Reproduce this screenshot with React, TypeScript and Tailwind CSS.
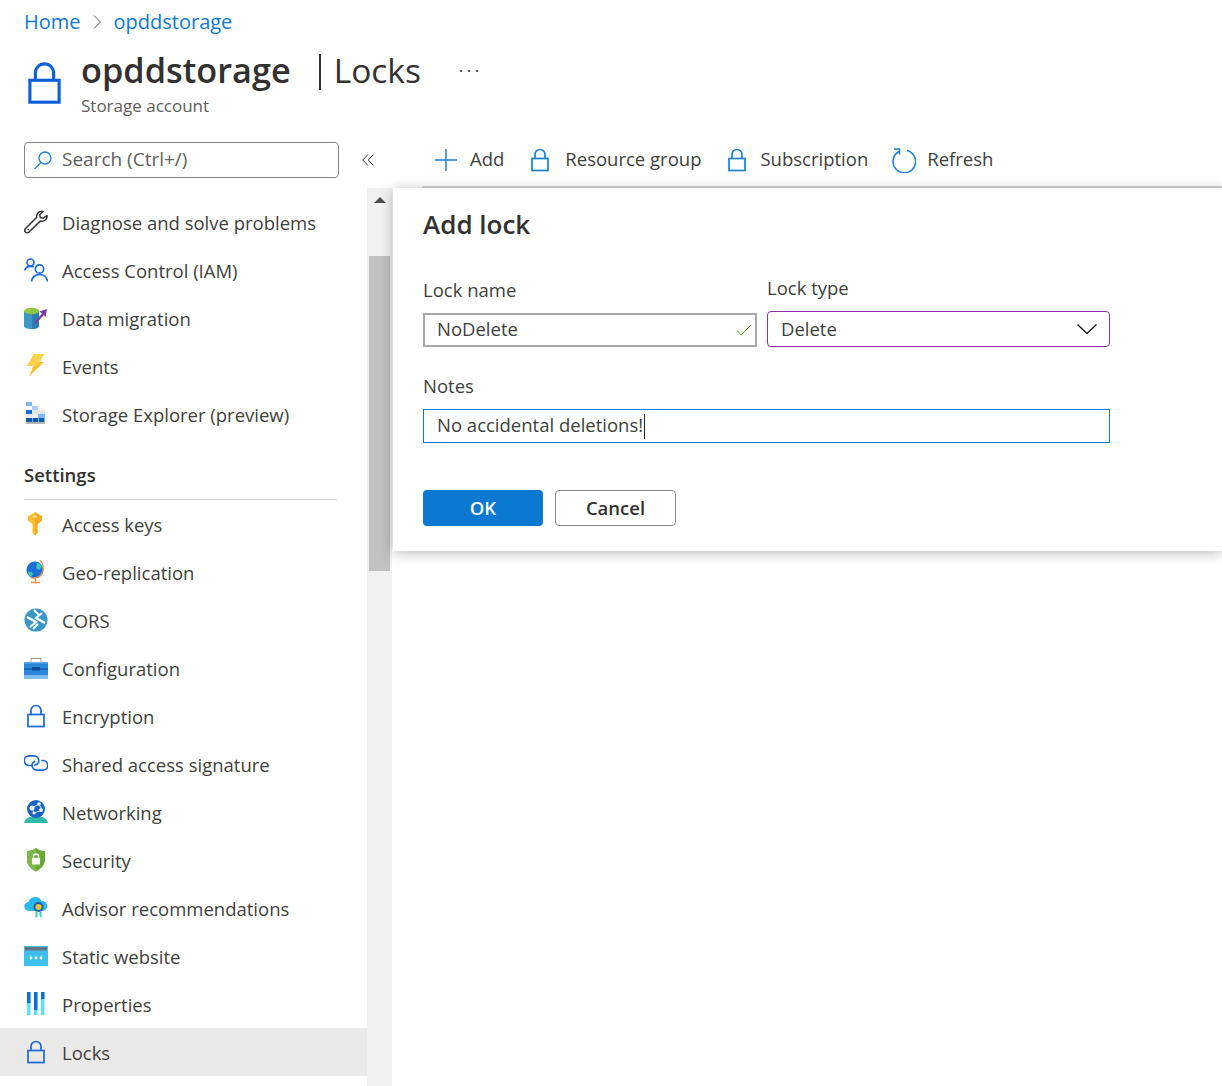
import type { ReactNode } from 'react';

function LockIcon({ className }: { className?: string }) {
  return (
    <svg viewBox="0 0 18 23" fill="none" stroke="currentColor" strokeWidth="1.7" className={className}>
      <path d="M4 10V6a5 5 0 0 1 10 0v4" />
      <rect x="1" y="10" width="16" height="12" />
    </svg>
  );
}

function NavSvg({ children }: { children: ReactNode }) {
  return (
    <svg viewBox="0 0 24 24" fill="none" className="h-6 w-6 shrink-0">
      {children}
    </svg>
  );
}

const icons: Record<string, ReactNode> = {
  wrench: (
    <NavSvg>
      <path
        d="M23 5.500c.6 3-2.300 6.600-6.500 5.400L5 22c-1.300 1.200-2.800 1-3.600 0-1-1-.9-2.300.2-3.500L12.700 7.300C12 3.500 15.500.5 19 1.500l-3.300 3.200.6 2.800 3 .7L23 5.500z"
        stroke="#333"
        strokeWidth="1.500"
        strokeLinejoin="round"
      />
      <circle cx="4.200" cy="19.500" r=".8" fill="#333" />
    </NavSvg>
  ),
  people: (
    <NavSvg>
      <g stroke="#1769e0" strokeWidth="1.700">
        <circle cx="6.500" cy="4.500" r="3.500" />
        <path d="M.7 12.500c.5-2.500 2.500-4.200 5.800-4.200 1.300 0 2.400.3 3.300.8" />
        <circle cx="15.500" cy="11" r="4.200" />
        <path d="M7.500 23.500c.3-4 3.500-7 8-7s7.500 3 8 7" />
      </g>
    </NavSvg>
  ),
  migration: (
    <NavSvg>
      <path d="M0 5h15v15c0 2-3.500 3-7.500 3S0 22 0 20z" fill="#3b97c6" />
      <path d="M8 5h7v15c0 1.500-3 3-7 3z" fill="#2b7fb0" />
      <ellipse cx="7.500" cy="5" rx="7.500" ry="3.200" fill="#8fc742" />
      <path d="M11 17 20 7" stroke="#7a3f9e" strokeWidth="2.500" />
      <path d="M15.500 5.500 23 3l-1.500 8z" fill="#7a3f9e" />
    </NavSvg>
  ),
  bolt: (
    <NavSvg>
      <path d="M10 0h10l-4.500 8H20L5 22.500 9.500 12H3z" fill="#fbc02d" />
      <path d="M10 0h10l-4.500 8-5 4H3z" fill="#fdd34d" />
    </NavSvg>
  ),
  explorer: (
    <NavSvg>
      <rect x="2" y="0" width="6" height="4" fill="#7db8f2" />
      <rect x="8" y="4" width="6" height="4" fill="#a8d0f7" />
      <rect x="2" y="8" width="6" height="4" fill="#0f6fd8" />
      <rect x="8" y="8" width="6" height="4" fill="#e6e6e6" />
      <rect x="14" y="8" width="7" height="4" fill="#e6e6e6" />
      <rect x="2" y="12" width="6" height="4" fill="#e6e6e6" />
      <rect x="8" y="12" width="6" height="4" fill="#eeeeee" />
      <rect x="14" y="12" width="7" height="4" fill="#7db8f2" />
      <rect x="2" y="16" width="6" height="4" fill="#0b5cad" />
      <rect x="8.500" y="16" width="5.500" height="4" fill="#0b5cad" />
      <rect x="14.500" y="16" width="6" height="4" fill="#0b5cad" />
      <rect x="2" y="20" width="19" height="2" fill="#b5b5b5" />
    </NavSvg>
  ),
  key: (
    <NavSvg>
      <path d="M11 0 18 4.500v4L13.500 12v9L11 23.500 8.500 21v-9L4 8.500v-4z" fill="#fdbf2f" />
      <path d="M11 0 18 4.500v4L13.500 12v9L11 23.500z" fill="#f9ab1f" />
      <rect x="9" y="3.500" width="4" height="2" rx="1" fill="#fff0b8" />
    </NavSvg>
  ),
  globe: (
    <NavSvg>
      <circle cx="11" cy="10" r="8.500" fill="#1a6fd6" />
      <path d="M13 3c3 0 5 2 5 4l-3 3-3-2zM4 12c2-1 4 0 5 2l-2 3c-2-1-3-3-3-5z" fill="#38c9b5" />
      <path d="M16 .5c4 3.500 4.500 12-1 16-2 1.500-6 2-8.500.8" stroke="#f08c46" strokeWidth="1.300" />
      <path d="M11.500 18.500v3M7 22.500h9" stroke="#f08c46" strokeWidth="1.500" />
    </NavSvg>
  ),
  cors: (
    <NavSvg>
      <circle cx="12" cy="12" r="11.500" fill="#3c97c4" />
      <path d="M3 9 12 14 6 19M21 15 12 10 18 5" stroke="#fff" strokeWidth="2.200" />
      <path d="M10 2l5 5M9 21l5-5" stroke="#fff" strokeWidth="2" />
    </NavSvg>
  ),
  briefcase: (
    <NavSvg>
      <path d="M7 6V2.500h10V6" stroke="#999" strokeWidth="1" />
      <rect x="0" y="6" width="24" height="17" fill="#2a86da" />
      <rect x="0" y="6" width="24" height="1.500" fill="#5ea9ec" />
      <rect x="0" y="12" width="24" height="2" fill="#1566bd" />
      <rect x="8" y="11" width="8" height="3.500" fill="#0b4f9c" />
      <rect x="0" y="19" width="24" height="4" fill="#7fbcf0" />
    </NavSvg>
  ),
  encryption: <LockIcon className="mx-[3px] h-6 w-[18px] shrink-0 text-[#1769e0]" />,
  link: (
    <NavSvg>
      <g stroke="#1769e0" strokeWidth="1.700" strokeLinecap="round">
        <path d="M8 13.500H5a4.800 4.800 0 0 1 0-9.600h5a4.800 4.800 0 0 1 4.800 4.800c0 2.400-1.800 4.300-4 4.300" />
        <path d="M10.500 9.500c-1.600.8-2.500 2.200-2.500 3.800a4.800 4.800 0 0 0 4.800 4.800H19a4.800 4.800 0 0 0 0-9.600h-1" />
      </g>
    </NavSvg>
  ),
  networking: (
    <NavSvg>
      <path d="M0 23c1-5 6-7 12-7s11 2 12 7z" fill="#2fb9a6" />
      <circle cx="12" cy="9" r="9" fill="#1b65c2" />
      <path d="M8 8 15 4l3 6-8 3z" stroke="#cfe3fa" strokeWidth="1" />
      <circle cx="8" cy="8" r="2.500" fill="#e3eefb" />
      <circle cx="15" cy="4" r="1.800" fill="#e3eefb" />
      <circle cx="17" cy="10" r="2" fill="#e3eefb" />
      <circle cx="10" cy="13" r="1.600" fill="#e3eefb" />
    </NavSvg>
  ),
  shield: (
    <NavSvg>
      <path d="M12 0c2.500 2 5 3 9 3v9c0 5-4 9-9 11.500C7 21 3 17 3 12V3c4 0 6.500-1 9-3z" fill="#6aa83a" />
      <path d="M12 0v23.500C7 21 3 17 3 12V3c4 0 6.500-1 9-3z" fill="#7ab648" />
      <rect x="8" y="10" width="8" height="6.500" fill="#fff" />
      <path d="M9.500 10V8.500a2.500 2.500 0 0 1 5 0V10" stroke="#fff" strokeWidth="1.300" />
    </NavSvg>
  ),
  advisor: (
    <NavSvg>
      <path d="M5 15a4.500 4.500 0 0 1-.5-9 7 7 0 0 1 13-1 5 5 0 0 1 1.500 10z" fill="#2ab7ea" />
      <circle cx="14.500" cy="11" r="5" fill="#1e5fa8" />
      <circle cx="14.500" cy="11" r="3" fill="#fbc02d" />
      <path d="M11.500 15v7l2-1.500V16zM17.500 15v7l-2-1.500V16z" fill="#3fd0c0" />
    </NavSvg>
  ),
  website: (
    <NavSvg>
      <rect x="0" y="2" width="24" height="20" fill="#3cc0ea" />
      <rect x="1" y="3" width="22" height="3.500" fill="#6a7480" />
      <circle cx="7" cy="14" r="1.400" fill="#fff" />
      <circle cx="12" cy="14" r="1.400" fill="#fff" />
      <circle cx="17" cy="14" r="1.400" fill="#fff" />
    </NavSvg>
  ),
  properties: (
    <NavSvg>
      <rect x="3" y="0" width="3.500" height="23" fill="#5ce0f7" />
      <rect x="3" y="0" width="3.500" height="11" fill="#0f6fd8" />
      <rect x="10" y="0" width="3.500" height="23" fill="#5ce0f7" />
      <rect x="10" y="0" width="3.500" height="18" fill="#0f6fd8" />
      <rect x="17" y="0" width="3.500" height="23" fill="#5ce0f7" />
      <rect x="17" y="0" width="3.500" height="7" fill="#0f6fd8" />
    </NavSvg>
  ),
};

function NavItem({ icon, label, active }: { icon: string; label: string; active?: boolean }) {
  return (
    <div className={`flex h-12 items-center gap-[14px] pl-6 ${active ? 'bg-[#ebe9e8]' : ''}`}>
      {icons[icon]}
      <span className="pt-[2px]">{label}</span>
    </div>
  );
}

function ToolButton({ icon, label, className }: { icon: ReactNode; label: string; className?: string }) {
  return (
    <div className={`flex items-center ${className ?? ''}`}>
      {icon}
      <span className="-mt-[2px]">{label}</span>
    </div>
  );
}

export default function App() {
  const topItems = [
    ['wrench', 'Diagnose and solve problems'],
    ['people', 'Access Control (IAM)'],
    ['migration', 'Data migration'],
    ['bolt', 'Events'],
    ['explorer', 'Storage Explorer (preview)'],
  ];
  const settingsItems = [
    ['key', 'Access keys'],
    ['globe', 'Geo-replication'],
    ['cors', 'CORS'],
    ['briefcase', 'Configuration'],
    ['encryption', 'Encryption'],
    ['link', 'Shared access signature'],
    ['networking', 'Networking'],
    ['shield', 'Security'],
    ['advisor', 'Advisor recommendations'],
    ['website', 'Static website'],
    ['properties', 'Properties'],
  ];

  return (
    <div className="h-[1086px] w-[1222px] overflow-hidden bg-white font-['Open_Sans',sans-serif] text-[18.500px] text-[#403f3e]">
      {/* Breadcrumb and title */}
      <header className="h-[142px] pl-6">
        <div className="flex h-11 items-center text-[20px] text-[#0f78d4]">
          <span>Home</span>
          <svg viewBox="0 0 8 14" fill="none" stroke="#555" strokeWidth="1" className="ml-3 mr-[13px] h-[14px] w-2">
            <path d="M1 .5 7.500 7 1 13.500" />
          </svg>
          <span>opddstorage</span>
        </div>
        <div className="flex">
          <LockIcon className="ml-1 mt-[18px] h-[42px] w-[33px] text-[#0b5fd9]" />
          <div className="ml-5">
            <div className="flex h-[52px] items-center text-[34.300px] text-[#323130]">
              <span className="font-semibold">opddstorage</span>
              <span className="ml-[28px] mt-1 h-[36px] w-[2px] bg-[#323130]" />
              <span className="ml-[13px] text-[33.500px]">Locks</span>
              <svg viewBox="0 0 18 2" fill="#222" className="ml-[39px] mt-[2px] h-[2px] w-[18px]">
                <circle cx="1" cy="1" r="1" />
                <circle cx="9" cy="1" r="1" />
                <circle cx="17" cy="1" r="1" />
              </svg>
            </div>
            <div className="-mt-px text-[17px] leading-[22px] text-[#605e5c]">Storage account</div>
          </div>
        </div>
      </header>

      <div className="flex">
        {/* Resource menu */}
        <aside className="w-[392px]">
          <div className="flex h-[46px] items-start pl-6">
            <div className="flex h-9 w-[315px] items-center rounded-sm border border-[#8a8886] pl-2 text-[19px] text-[#605e5c]">
              <svg viewBox="0 0 20 20" fill="none" stroke="#1b7fd6" strokeWidth="1.300" className="h-5 w-5">
                <circle cx="12" cy="8" r="6" />
                <path d="M8 12.500 1.500 19" />
              </svg>
              <span className="-mt-[2px] ml-[9px]">Search (Ctrl+/)</span>
            </div>
            <svg viewBox="0 0 12 12" fill="none" stroke="#333" strokeWidth="1" className="ml-[23px] mt-3 h-3 w-3">
              <path d="M6 .5.7 6 6 11.500M11.500.5 6.200 6l5.300 5.500" />
            </svg>
          </div>
          <div className="flex h-[898px]">
            <nav className="w-[367px] pt-[10px]">
              {topItems.map(([icon, label]) => (
                <NavItem key={label} icon={icon} label={label} />
              ))}
              <div className="ml-6 mr-[30px] flex h-[62px] items-end border-b border-[#d6d6d6] pb-[10px] font-semibold text-[#323130]">
                Settings
              </div>
              {settingsItems.map(([icon, label]) => (
                <NavItem key={label} icon={icon} label={label} />
              ))}
              <NavItem icon="encryption" label="Locks" active />
            </nav>
            {/* Scrollbar */}
            <div className="w-[25px] bg-[#f1f1f1] px-[2px]">
              <div className="flex h-[68px] items-center justify-center pb-[44px]">
                <div className="h-0 w-0 border-x-[6px] border-b-[6px] border-x-transparent border-b-[#505050]" />
              </div>
              <div className="h-[315px] bg-[#c1c1c1]" />
            </div>
          </div>
        </aside>

        {/* Blade content */}
        <main className="flex-1">
          <div className="ml-[30px] flex h-[46px] items-start border-b-2 border-[#d2d2d2] pl-[13px]">
            <div className="flex h-9 items-center">
              <ToolButton
                icon={
                  <svg viewBox="0 0 22 22" fill="none" stroke="#1b7fd6" strokeWidth="1.500" className="mr-[13px] h-[22px] w-[22px]">
                    <path d="M11 0v22M0 11h22" />
                  </svg>
                }
                label="Add"
              />
              <ToolButton
                className="ml-[27px]"
                icon={<LockIcon className="mr-[16px] h-[24px] w-[18px] text-[#1b7fd6]" />}
                label="Resource group"
              />
              <ToolButton
                className="ml-[27px]"
                icon={<LockIcon className="mr-[14px] h-[24px] w-[18px] text-[#1b7fd6]" />}
                label="Subscription"
              />
              <ToolButton
                className="ml-[24px]"
                icon={
                  <svg viewBox="0 0 24 26" fill="none" stroke="#1b7fd6" strokeWidth="1.500" className="mr-[11px] h-[26px] w-6">
                    <path d="M7 4.500A11.300 11.300 0 1 0 15 3.500" />
                    <path d="M2 2h5.500v5.500" />
                  </svg>
                }
                label="Refresh"
              />
            </div>
          </div>

          <section className="ml-px h-[363px] bg-white pl-[30px] pt-4 shadow-[0_2px_12px_rgba(0,0,0,0.28)]">
            <h2 className="text-[26px] font-semibold leading-10 text-[#323130]">Add lock</h2>
            <div className="mt-8 flex w-[687px] items-end gap-[10px]">
              <div className="w-[334px]">
                <label className="block leading-6">Lock name</label>
                <div className="mt-[11px] flex h-[34px] items-center justify-between border-2 border-[#a8a8a8] pl-3 pr-[3px]">
                  <span className="-mt-[2px]">NoDelete</span>
                  <svg viewBox="0 0 16 12" fill="none" stroke="#5db12f" strokeWidth="1" className="h-3 w-4">
                    <path d="M1 6.500 5 11 15 1" />
                  </svg>
                </div>
              </div>
              <div className="w-[343px]">
                <label className="block leading-6">Lock type</label>
                <div className="mt-[11px] flex h-9 items-center justify-between rounded-sm border border-[#8b2fa3] pl-[13px] pr-3">
                  <span className="-mt-px">Delete</span>
                  <svg viewBox="0 0 20 10" fill="none" stroke="#111" strokeWidth="1.300" className="h-[10px] w-5">
                    <path d="M.5.5 10 9.500 19.500.5" />
                  </svg>
                </div>
              </div>
            </div>
            <label className="mt-[27px] block leading-6">Notes</label>
            <div className="mt-[11px] flex h-[34px] w-[687px] items-center border border-[#0f78d4] pl-[13px]">
              <span className="-mt-[2px]">No accidental deletions!</span>
              <span className="ml-px h-[25px] w-px bg-[#222]" />
            </div>
            <div className="mt-[47px] flex gap-3">
              <button className="h-9 w-[120px] rounded-sm bg-[#0b78d2] font-semibold text-white">OK</button>
              <button className="h-9 w-[121px] rounded-sm border border-[#8a8886] font-semibold text-[#323130]">
                Cancel
              </button>
            </div>
          </section>
        </main>
      </div>
    </div>
  );
}
